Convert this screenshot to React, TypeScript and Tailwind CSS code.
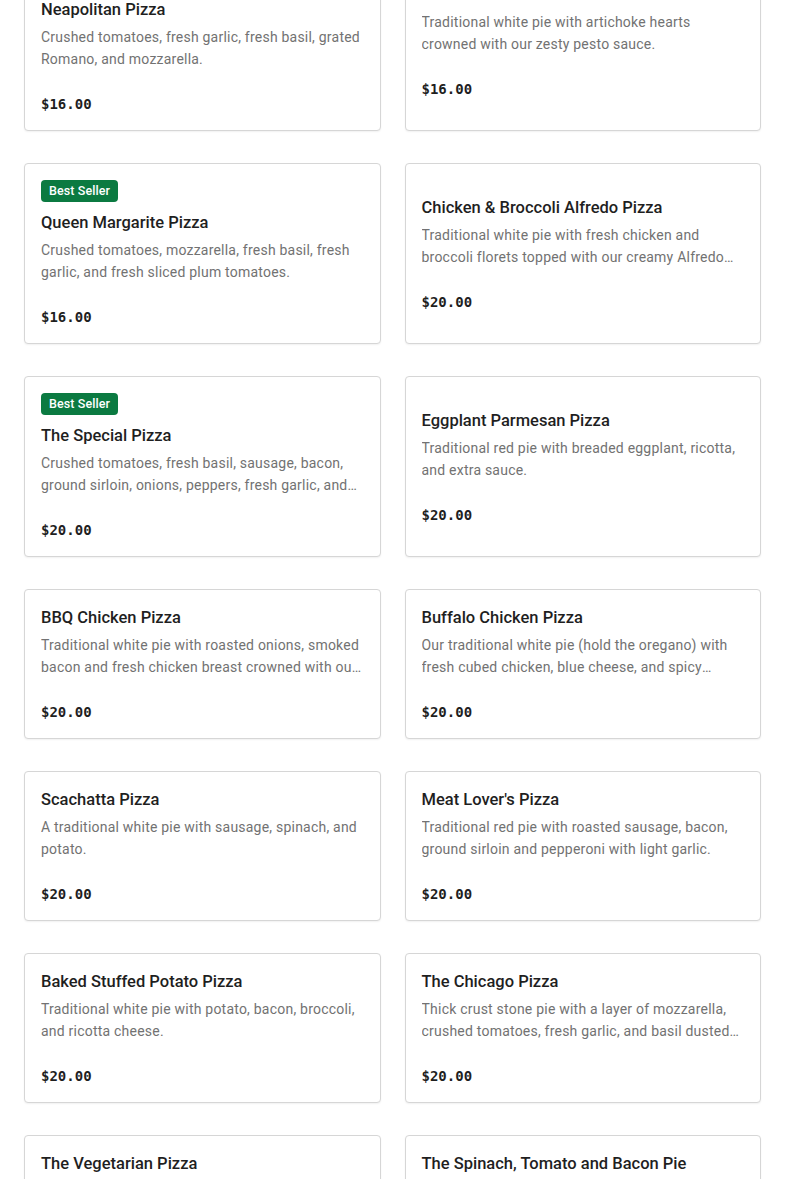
import React from "react";

type Pizza = {
  name: string;
  desc: string;
  price: string;
  bestSeller?: boolean;
};

const pizzas: Pizza[] = [
  {
    name: "Neapolitan Pizza",
    desc: "Crushed tomatoes, fresh garlic, fresh basil, grated Romano, and mozzarella.",
    price: "$16.00",
    bestSeller: true,
  },
  {
    name: "Artichoke & Pesto Pizza",
    desc: "Traditional white pie with artichoke hearts crowned with our zesty pesto sauce.",
    price: "$16.00",
  },
  {
    name: "Queen Margarite Pizza",
    desc: "Crushed tomatoes, mozzarella, fresh basil, fresh garlic, and fresh sliced plum tomatoes.",
    price: "$16.00",
    bestSeller: true,
  },
  {
    name: "Chicken & Broccoli Alfredo Pizza",
    desc: "Traditional white pie with fresh chicken and broccoli florets topped with our creamy Alfredo sauce.",
    price: "$20.00",
  },
  {
    name: "The Special Pizza",
    desc: "Crushed tomatoes, fresh basil, sausage, bacon, ground sirloin, onions, peppers, fresh garlic, and mozzarella.",
    price: "$20.00",
    bestSeller: true,
  },
  {
    name: "Eggplant Parmesan Pizza",
    desc: "Traditional red pie with breaded eggplant, ricotta, and extra sauce.",
    price: "$20.00",
  },
  {
    name: "BBQ Chicken Pizza",
    desc: "Traditional white pie with roasted onions, smoked bacon and fresh chicken breast crowned with our tangy BBQ sauce.",
    price: "$20.00",
  },
  {
    name: "Buffalo Chicken Pizza",
    desc: "Our traditional white pie (hold the oregano) with fresh cubed chicken, blue cheese, and spicy buffalo sauce.",
    price: "$20.00",
  },
  {
    name: "Scachatta Pizza",
    desc: "A traditional white pie with sausage, spinach, and potato.",
    price: "$20.00",
  },
  {
    name: "Meat Lover's Pizza",
    desc: "Traditional red pie with roasted sausage, bacon, ground sirloin and pepperoni with light garlic.",
    price: "$20.00",
  },
  {
    name: "Baked Stuffed Potato Pizza",
    desc: "Traditional white pie with potato, bacon, broccoli, and ricotta cheese.",
    price: "$20.00",
  },
  {
    name: "The Chicago Pizza",
    desc: "Thick crust stone pie with a layer of mozzarella, crushed tomatoes, fresh garlic, and basil dusted with Romano.",
    price: "$20.00",
  },
  {
    name: "The Vegetarian Pizza",
    desc: "Traditional red pie with mushrooms, onions, peppers, broccoli, and fresh garlic.",
    price: "$20.00",
  },
  {
    name: "The Spinach, Tomato and Bacon Pie",
    desc: "Traditional white pie with fresh spinach, sliced tomatoes, and crispy bacon.",
    price: "$20.00",
  },
];

const PizzaCard: React.FC<{ pizza: Pizza }> = ({ pizza }) => (
  <div className="flex flex-col justify-center rounded-[4px] border border-[#d6d6d6] bg-white p-4 shadow-[0_1px_2px_rgba(0,0,0,0.06)]">
    {pizza.bestSeller && (
      <span className="mb-[9px] inline-flex h-[22px] w-fit items-center rounded-[4px] bg-[#0b7a41] px-2 text-[12.5px] font-medium tracking-[0.1px] text-white">
        Best Seller
      </span>
    )}
    <h3 className="text-[16.5px] font-medium leading-6 text-[#1f1f1f]">
      {pizza.name}
    </h3>
    <p className="mt-1 line-clamp-2 text-[14px] leading-[22px] tracking-[0.22px] text-[#727272]">
      {pizza.desc}
    </p>
    <div className="mt-6 font-['DejaVu_Sans_Mono',monospace] text-[14px] font-bold leading-5 text-[#1f1f1f]">
      {pizza.price}
    </div>
  </div>
);

export default function App() {
  return (
    <div className="min-h-screen overflow-hidden bg-white font-['Roboto',sans-serif]">
      <div className="-mt-[50px] grid grid-cols-2 gap-x-6 gap-y-8 px-6 pb-8">
        {pizzas.map((p) => (
          <PizzaCard key={p.name} pizza={p} />
        ))}
      </div>
    </div>
  );
}
